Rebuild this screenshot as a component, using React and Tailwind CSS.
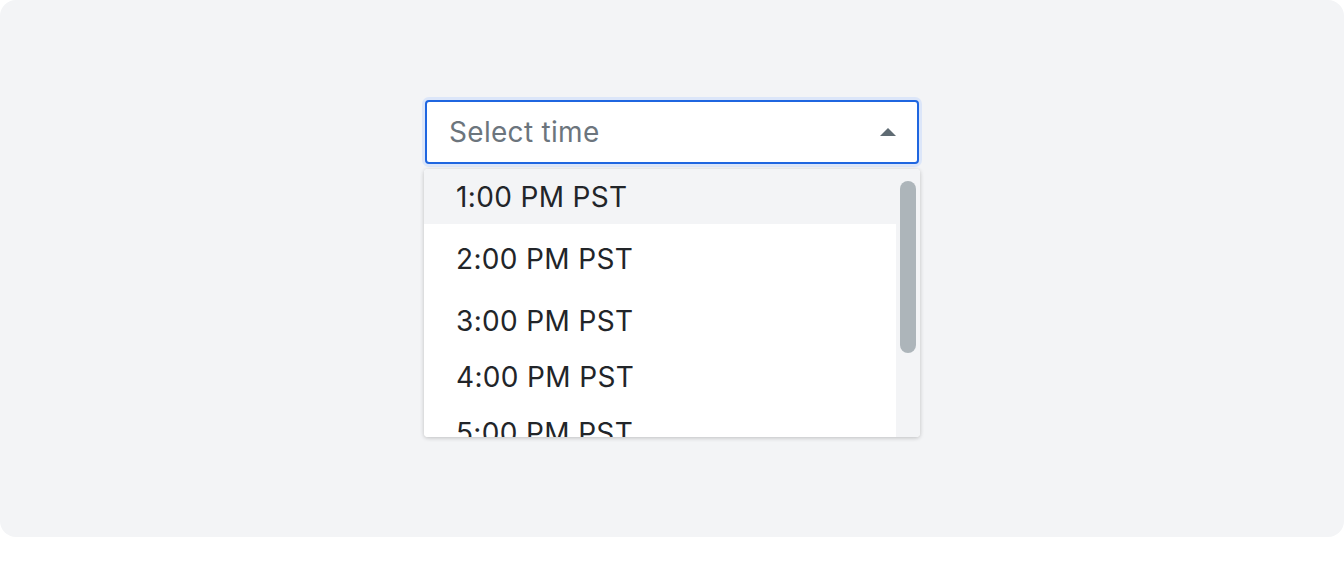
import React from "react";

const times = [
  { label: "1:00 PM PST", h: "h-[55px]", active: true },
  { label: "2:00 PM PST", h: "h-[70px]" },
  { label: "3:00 PM PST", h: "h-[54px]" },
  { label: "4:00 PM PST", h: "h-[58px]" },
  { label: "5:00 PM PST", h: "h-[54px]" },
];

const App = () => {
  return (
    <div className="w-[1344px] h-[570px] bg-white font-['Inter',sans-serif]">
      <div className="h-[537px] bg-[#f3f4f6] rounded-2xl flex flex-col items-center pt-[100px]">
        {/* Select input */}
        <div className="w-[494px] h-[64px] bg-white border-2 border-[#1f66e0] rounded-[4px] ring-[3px] ring-[#dce6f9] flex items-center justify-between pl-[22px] pr-[21px]">
          <span className="text-[28px] text-[#6c757d] leading-none tracking-[0.3px]">Select time</span>
          <svg width="16" height="8" viewBox="0 0 16 8">
            <path d="M0 8 L8 0 L16 8 Z" fill="#5f6b73" />
          </svg>
        </div>

        {/* Options list */}
        <div className="mt-[5px] w-[496px] h-[268px] bg-white rounded-[4px] shadow-[0_1px_4px_rgba(0,0,0,0.22)] flex overflow-hidden">
          <div className="flex-1 overflow-hidden">
            {times.map((t) => (
              <div
                key={t.label}
                className={`${t.h} shrink-0 flex items-center pl-[32px] text-[28px] text-[#222529] leading-none tracking-[0.35px] ${
                  t.active ? "bg-[#f3f4f6]" : "bg-white"
                }`}
              >
                {t.label}
              </div>
            ))}
          </div>
          <div className="w-[24px] bg-[#f3f4f6] pt-[12px] pl-[4px]">
            <div className="w-[16px] h-[172px] rounded-full bg-[#adb5ba]" />
          </div>
        </div>
      </div>
    </div>
  );
};

export default App;
